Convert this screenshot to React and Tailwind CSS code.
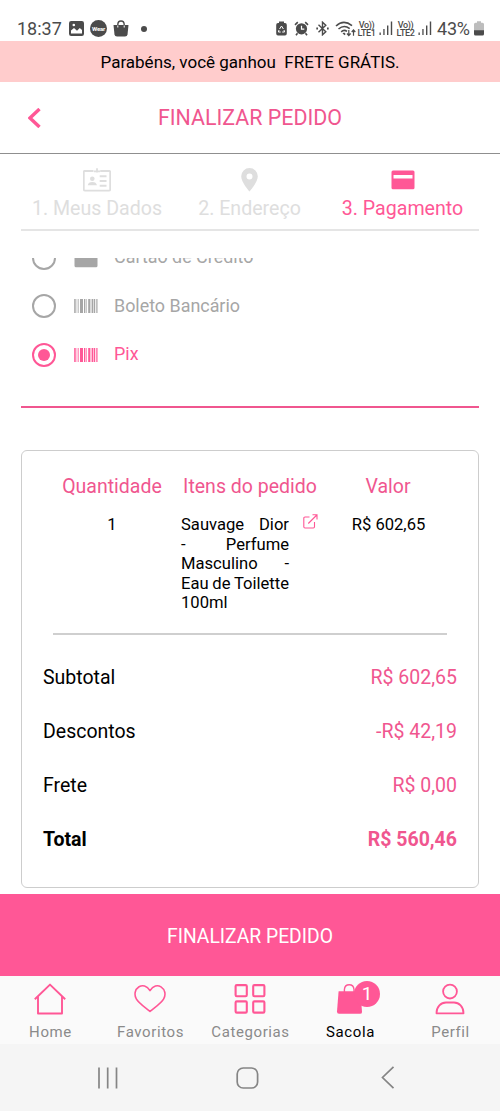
import React from "react";

const steps = [
  { label: "1. Meus Dados", icon: IdCardIcon, width: "w-[152px]", color: "text-[#dedede]" },
  { label: "2. Endereço", icon: PinIcon, width: "w-[153px]", color: "text-[#dedede]" },
  { label: "3. Pagamento", icon: CardIcon, width: "w-[153px]", color: "text-[#ff5796]" },
];

const methods = [
  { label: "Cartão de Crédito", icon: CardIcon },
  { label: "Boleto Bancário", icon: BarcodeIcon },
  { label: "Pix", icon: BarcodeIcon, selected: true },
];

const productLines = ["Sauvage Dior", "- Perfume", "Masculino -", "Eau de Toilette"];

const totals = [
  { label: "Subtotal", value: "R$ 602,65" },
  { label: "Descontos", value: "-R$ 42,19" },
  { label: "Frete", value: "R$ 0,00" },
  { label: "Total", value: "R$ 560,46", bold: true },
];

const tabs = [
  { label: "Home", icon: HomeIcon },
  { label: "Favoritos", icon: HeartIcon },
  { label: "Categorias", icon: GridIcon },
  { label: "Sacola", icon: BagIcon, active: true, badge: 1 },
  { label: "Perfil", icon: UserIcon },
];

function IdCardIcon() {
  return (
    <svg width="28" height="24" viewBox="0 0 28 24" fill="none" stroke="currentColor">
      <path d="M10.5 3H1.5Q.8 3 .8 4V21.5Q.8 22.7 2 22.7H26Q27.2 22.7 27.2 21.5V4Q27.2 3 26.2 3H17.2" strokeWidth="1.8" />
      <path d="M14 .2V4.6M11 3.3H17" strokeWidth="1.8" />
      <circle cx="9.3" cy="10.7" r="2.3" fill="currentColor" stroke="none" />
      <path d="M4.7 17.3Q5.2 13.9 9.3 13.9T13.9 17.3Z" fill="currentColor" stroke="none" />
      <path d="M16.7 8.2H23.5M16.7 13H23.5M16.7 17.8H23.5" strokeWidth="1.9" />
    </svg>
  );
}

function PinIcon() {
  return (
    <svg width="17" height="24" viewBox="0 0 17 24" fill="currentColor">
      <path fillRule="evenodd" d="M8.5 0A8.3 8.3 0 0 0 .2 8.3C.2 14.4 8.5 23.6 8.5 23.6S16.8 14.4 16.8 8.3A8.3 8.3 0 0 0 8.5 0ZM8.5 5.4A3 3 0 1 1 8.5 11.4A3 3 0 1 1 8.5 5.4Z" />
    </svg>
  );
}

function CardIcon() {
  return (
    <svg width="24" height="20" viewBox="0 0 24 20" fill="currentColor">
      <path fillRule="evenodd" d="M2 .5H22Q23.5.5 23.5 2V17.8Q23.5 19.3 22 19.3H2Q.5 19.3.5 17.8V2Q.5.5 2 .5ZM2.5 5V8.6H21.5V5Z" />
    </svg>
  );
}

function BarcodeIcon() {
  return (
    <svg width="24" height="14" viewBox="0 0 24 14" fill="currentColor">
      <path d="M.2 0H1.7V14H.2ZM2.7 0H3.3V14H2.7ZM4.2 0H4.8V14H4.2ZM6 0H9V14H6ZM10 0H11.4V14H10ZM12.4 0H13V14H12.4ZM14.2 0H16.4V14H14.2ZM17.6 0H19.2V14H17.6ZM19.8 0H21.2V14H19.8ZM22.3 0H23.5V14H22.3Z" />
    </svg>
  );
}

function ExternalLinkIcon() {
  return (
    <svg className="text-[#ff5796]" width="15" height="15" viewBox="0 0 15 15" fill="none" stroke="currentColor" strokeWidth="1.1">
      <path d="M6.5 3H2Q.8 3 .8 4.2V12.8Q.8 14 2 14H10.3Q11.5 14 11.5 12.8V8M5.3 9.5L13.8 1M9.5.8H14V5.5" />
    </svg>
  );
}

function HomeIcon() {
  return (
    <svg width="32" height="32" viewBox="0 0 32 32" fill="none" stroke="currentColor" strokeWidth="1.9" strokeLinejoin="round">
      <path d="M.8 16.3L16 1.6L31.2 16.3M4 13.8V30.5H28V13.8" />
    </svg>
  );
}

function HeartIcon() {
  return (
    <svg width="32" height="32" viewBox="0 0 32 32" fill="none" stroke="currentColor" strokeWidth="1.6" strokeLinejoin="round">
      <path d="M16 7.6C12.8 2.4 8.4 1.7 5 3.8C.8 6.5 0 11.7 2.3 15.8C5.1 20.6 11.5 24.5 16 28.4C20.5 24.5 26.9 20.6 29.7 15.8C32 11.7 31.2 6.5 27 3.8C23.6 1.7 19.2 2.4 16 7.6Z" />
    </svg>
  );
}

function GridIcon() {
  return (
    <svg width="32" height="32" viewBox="0 0 32 32" fill="none" stroke="currentColor" strokeWidth="2.1">
      <rect x="1.6" y="2.1" width="11.2" height="11.2" rx="1.2" />
      <rect x="19.2" y="2.1" width="11.2" height="11.2" rx="1.2" />
      <rect x="1.6" y="18.4" width="11.2" height="11.2" rx="1.2" />
      <rect x="19.2" y="18.4" width="11.2" height="11.2" rx="1.2" />
    </svg>
  );
}

function BagIcon() {
  return (
    <svg width="32" height="32" viewBox="0 0 32 32" fill="currentColor">
      <path d="M4.6 8.3H26.5L28 28.9Q28 30.8 26 30.8H5Q2.9 30.8 3 28.6Z" />
      <path d="M10.4 10V6.5Q10.8 1.8 15.2 1.8T20 6.5V10" fill="none" stroke="currentColor" strokeWidth="1.4" />
    </svg>
  );
}

function UserIcon() {
  return (
    <svg width="32" height="32" viewBox="0 0 32 32" fill="none" stroke="currentColor" strokeWidth="1.8" strokeLinejoin="round">
      <circle cx="16" cy="8.6" r="6.9" />
      <path d="M2.5 30.3C2.5 23.8 7 19.5 12 19.5H20C25 19.5 29.5 23.8 29.5 30.3Z" />
    </svg>
  );
}

function SignalIcon() {
  return (
    <svg width="14" height="15" viewBox="0 0 14 15" fill="currentColor">
      <path d="M.5 11.5H1.8V14H.5ZM4.3 8H5.6V14H4.3ZM8 4.5H9.4V14H8ZM11.8.5H13.2V14H11.8Z" />
    </svg>
  );
}

function Lte({ line }) {
  return (
    <div className="flex w-[19px] shrink-0 flex-col items-center text-[9px] leading-[8px] font-medium tracking-[-0.4px] whitespace-nowrap">
      <span>Vo))</span>
      <span>LTE{line}</span>
    </div>
  );
}

function StatusBar() {
  return (
    <div className="flex h-[41px] items-center justify-between pt-4 pr-[16px] pl-[17px] text-[#4b4b4b]">
      <div className="flex items-center">
        <span className="w-[45px] text-[18px] leading-none whitespace-nowrap">18:37</span>
        <svg className="ml-[7px]" width="15" height="15" viewBox="0 0 15 15">
          <rect width="15" height="15" rx="2.2" fill="currentColor" />
          <path d="M2 12.5V9.5L5 7L8 9.8L10.8 7L13 9V12.5Z" fill="#fff" />
          <circle cx="4.8" cy="4" r="1.3" fill="#fff" />
        </svg>
        <span className="ml-[6px] flex size-[17px] items-center justify-center rounded-full bg-[#4b4b4b] text-[6px] font-bold tracking-tight text-white">
          Wear
        </span>
        <svg className="ml-[6px]" width="16" height="17" viewBox="0 0 16 17" fill="currentColor">
          <path d="M.5 5H15.5L14.5 14.5Q14.2 16.5 12 16.5H4Q1.8 16.5 1.5 14.5Z" />
          <path d="M4.8 5.5V4.7Q4.8 1 8 1T11.2 4.7V5.5" fill="none" stroke="currentColor" strokeWidth="1.4" />
          <path d="M4.8 5.5V7.5M11.2 5.5V7.5" stroke="#fff" strokeWidth="1" />
        </svg>
        <span className="ml-[12px] size-[6px] rounded-full bg-[#4b4b4b]" />
      </div>

      <div className="flex items-center">
        <svg width="11" height="15" viewBox="0 0 11 15">
          <path d="M3 .5H8V2H9Q10.8 2 10.8 4V12.5Q10.8 14.5 9 14.5H2Q.2 14.5.2 12.5V4Q.2 2 2 2H3Z" fill="currentColor" />
          <path d="M3.6 8L5.5 5L7.4 8M8 9L8.5 11H6.2M4.7 11H2.4L3 9" fill="none" stroke="#fff" strokeWidth="1" />
        </svg>
        <svg className="ml-[7px]" width="15" height="15" viewBox="0 0 15 15" fill="none" stroke="currentColor">
          <circle cx="7.5" cy="7.8" r="5.6" fill="currentColor" stroke="none" />
          <path d="M1 3.8L3.8 1.2M14 3.8L11.2 1.2M3.5 12.3L2 14.3M11.5 12.3L13 14.3" strokeWidth="1.6" />
          <path d="M7.5 4.8V8.2H10.3" stroke="#fff" strokeWidth="1.2" />
        </svg>
        <svg className="ml-[7px]" width="13" height="15" viewBox="0 0 13 15" fill="none" stroke="currentColor" strokeWidth="1.4">
          <path d="M2.5 3.8L9.8 10.8L6.5 13.8V1.2L9.8 4.2L2.5 11.2" />
          <path d="M.3 7.5H2M11 7.5H12.7" strokeWidth="1.8" />
        </svg>
        <svg className="ml-[6px]" width="22" height="16" viewBox="0 0 22 16" fill="none" stroke="currentColor" strokeWidth="1.6">
          <path d="M1 5Q8.5-2 17 4.6M3.5 8Q9 3.2 14.7 7.6M6.2 10.8Q9 8.2 12 10.4" />
          <path d="M7.5 12.2L9.2 11.5L10.7 13L9.5 14.2Z" fill="currentColor" stroke="none" />
          <path d="M13.8 9V14.3M12 12.5L13.8 14.5L15.6 12.5M18.5 14.8V9.2M16.7 11L18.5 9L20.3 11" strokeWidth="1.2" />
        </svg>
        <Lte line="1" />
        <div className="ml-[3px]"><SignalIcon /></div>
        <div className="ml-[3px] flex"><Lte line="2" /></div>
        <div className="ml-[3px]"><SignalIcon /></div>
        <span className="ml-[5px] w-[34px] text-[18px] leading-none tracking-[-0.2px] whitespace-nowrap">43%</span>
        <svg className="ml-[3px]" width="10" height="15" viewBox="0 0 10 15">
          <path d="M3 .3H7V1.8H8.5Q10 1.8 10 3.3V10H0V3.3Q0 1.8 1.5 1.8H3Z" fill="#bdbdbd" />
          <path d="M0 9.3H10V13Q10 14.5 8.5 14.5H1.5Q0 14.5 0 13Z" fill="currentColor" />
        </svg>
      </div>
    </div>
  );
}

function PaymentMethod({ method }) {
  const Icon = method.icon;
  return (
    <div className={`flex h-[48.5px] items-center ${method.selected ? "text-[#ff5796]" : "text-[#a6a6a6]"}`}>
      <span className="flex size-6 items-center justify-center rounded-full border-2 border-current">
        {method.selected && <span className="size-3 rounded-full bg-current" />}
      </span>
      <span className="ml-[18px] w-6">
        <Icon />
      </span>
      <span className="ml-4 text-[17.9px]">{method.label}</span>
    </div>
  );
}

function OrderSummary() {
  return (
    <div className="h-[438px] rounded-md border-[1.5px] border-[#cdcdcd] px-[21px]">
      <div className="mx-[10px] h-[184px] border-b-2 border-[#cfcfcf] pt-[24px]">
        <div className="flex text-[19.5px] leading-6 text-[#f0568f]">
          <span className="w-[118px] shrink-0 text-center">Quantidade</span>
          <span className="w-[158px] shrink-0 text-center">Itens do pedido</span>
          <span className="w-[118px] shrink-0 text-center">Valor</span>
        </div>
        <div className="mt-[16px] flex text-[16.6px] leading-[19.5px]">
          <span className="w-[118px] shrink-0 text-center">1</span>
          <div className="ml-[10px] w-[108px] shrink-0">
            {productLines.map((line) => (
              <p key={line} className="[text-align-last:justify] [word-spacing:-2px]">{line}</p>
            ))}
            <p>100ml</p>
          </div>
          <span className="-mt-px ml-[14px] w-[15px] shrink-0">
            <ExternalLinkIcon />
          </span>
          <span className="w-[129px] shrink-0 pl-[12px] text-center whitespace-nowrap">R$ 602,65</span>
        </div>
      </div>
      <div className="pt-[16px]">
        {totals.map((row) => (
          <div key={row.label} className={`flex h-[54px] items-center justify-between text-[19.5px] ${row.bold ? "font-bold" : ""}`}>
            <span>{row.label}</span>
            <span className="text-[#f0568f]">{row.value}</span>
          </div>
        ))}
      </div>
    </div>
  );
}

function TabBar() {
  return (
    <div className="flex h-[68px] bg-[#fafafa]">
      {tabs.map((tab) => {
        const Icon = tab.icon;
        return (
          <div key={tab.label} className="flex w-[100px] flex-col items-center pt-[7px]">
            <div className="relative text-[#ff5796]">
              <Icon />
              {tab.badge && (
                <span className="absolute -top-[2px] left-[20px] flex size-[26px] items-center justify-center rounded-full bg-[#ff5796] text-[19px] text-white">
                  {tab.badge}
                </span>
              )}
            </div>
            <span className={`mt-[7px] pl-px text-[15px] leading-[20px] tracking-[0.6px] ${tab.active ? "text-black" : "text-[#8a8a8a]"}`}>
              {tab.label}
            </span>
          </div>
        );
      })}
    </div>
  );
}

function SystemNav() {
  return (
    <div className="flex h-[67px] items-center bg-[#f5f5f5] pl-[97px] text-[#858585]">
      <svg width="22" height="22" viewBox="0 0 22 22" fill="none" stroke="currentColor" strokeWidth="1.7">
        <path d="M2 .5V21.5M10.7 .5V21.5M19.5 .5V21.5" />
      </svg>
      <svg className="ml-[117px]" width="23" height="22" viewBox="0 0 23 22" fill="none" stroke="currentColor" strokeWidth="1.7">
        <rect x="1.2" y="1" width="20.4" height="20" rx="6" />
      </svg>
      <svg className="ml-[122px]" width="14" height="23" viewBox="0 0 14 23" fill="none" stroke="currentColor" strokeWidth="1.7">
        <path d="M12.5 .8L1.5 11.5L12.5 22.2" />
      </svg>
    </div>
  );
}

export default function App() {
  return (
    <div className="flex h-[1111px] w-[500px] flex-col overflow-hidden bg-white font-['Roboto',sans-serif] text-black">
      <StatusBar />
      <div className="flex h-[41px] items-center justify-center bg-[#ffcccc] pt-[2px] text-[17px] whitespace-pre">
        {"Parabéns, você ganhou  FRETE GRÁTIS."}
      </div>

      <header className="flex h-[72px] items-center border-b border-[#8f8f8f] pl-[28px] text-[#f0568f]">
        <svg width="13" height="20" viewBox="0 0 13 20" fill="none" stroke="#ff5796" strokeWidth="3.4">
          <path d="M11.5 1L2 10L11.5 19" />
        </svg>
        <h1 className="mr-[41px] flex-1 pt-[2px] text-center text-[21.4px]">FINALIZAR PEDIDO</h1>
      </header>

      <div className="mx-[21px] flex h-[77px] shrink-0 border-b-2 border-[#e5e5e5]">
        {steps.map((step) => {
          const Icon = step.icon;
          return (
            <div key={step.label} className={`flex flex-col items-center pt-[14px] ${step.width} ${step.color}`}>
              <div className="flex h-6 items-center">
                <Icon />
              </div>
              <span className="mt-[5px] text-[19.6px] leading-6 whitespace-nowrap">{step.label}</span>
            </div>
          );
        })}
      </div>

      <main className="mx-[21px] mt-[27px] h-[636px] shrink-0 overflow-hidden">
        <div className="-mt-[24.5px] h-[174.5px] border-b-2 border-[#f0568f] pl-[11px]">
          {methods.map((method) => (
            <PaymentMethod key={method.label} method={method} />
          ))}
        </div>
        <div className="mt-[42px]">
          <OrderSummary />
        </div>
      </main>

      <button className="flex h-[82px] shrink-0 items-center justify-center bg-[#ff5796] pt-[4px] text-[19.3px] text-white">
        FINALIZAR PEDIDO
      </button>
      <TabBar />
      <SystemNav />
    </div>
  );
}
